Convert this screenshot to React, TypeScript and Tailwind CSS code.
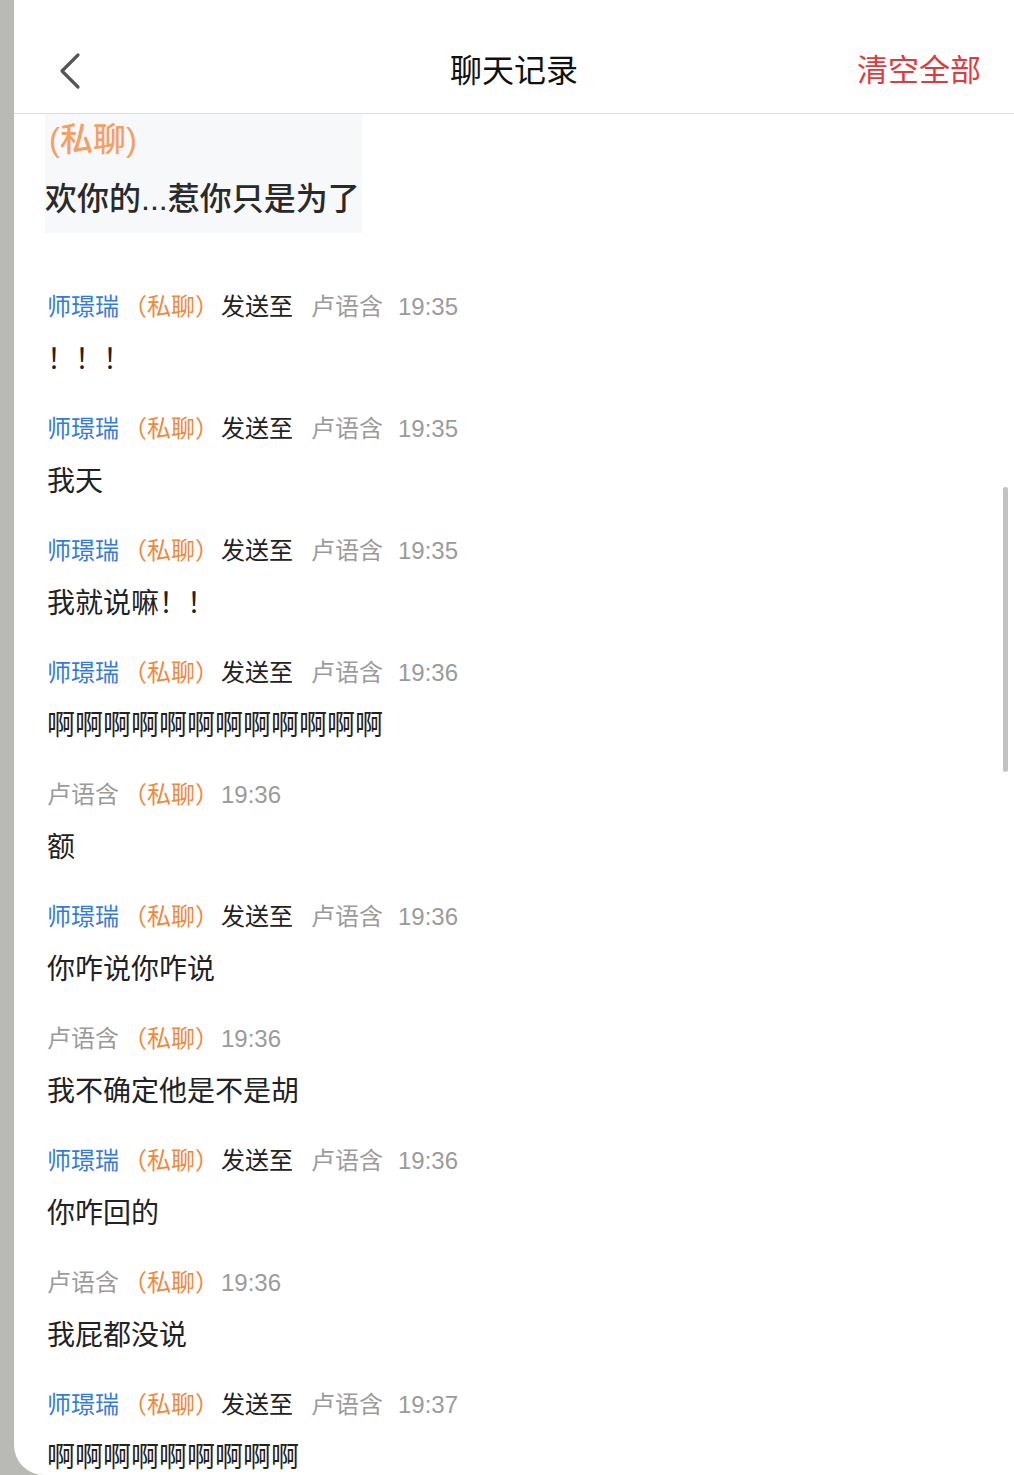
import React from "react";

type Msg = {
  from: "shi" | "lu";
  time: string;
  text: string;
};

const msgs: Msg[] = [
  { from: "shi", time: "19:35", text: "！！！" },
  { from: "shi", time: "19:35", text: "我天" },
  { from: "shi", time: "19:35", text: "我就说嘛！！" },
  { from: "shi", time: "19:36", text: "啊啊啊啊啊啊啊啊啊啊啊啊" },
  { from: "lu", time: "19:36", text: "额" },
  { from: "shi", time: "19:36", text: "你咋说你咋说" },
  { from: "lu", time: "19:36", text: "我不确定他是不是胡" },
  { from: "shi", time: "19:36", text: "你咋回的" },
  { from: "lu", time: "19:36", text: "我屁都没说" },
  { from: "shi", time: "19:37", text: "啊啊啊啊啊啊啊啊啊" },
];

const font = { fontFamily: '"Liberation Sans", "Noto Sans CJK SC", sans-serif' };

function MsgRow({ m }: { m: Msg }) {
  return (
    <div className="pt-[20px]">
      <div className="flex h-[48px] items-center whitespace-nowrap pt-[2px] text-[24px]">
        {m.from === "shi" ? (
          <>
            <span className="mr-[4px] text-[#3479e0]">师璟瑞</span>
            <span className="text-[#f0883c]">（私聊）</span>
            <span className="ml-[2px] mr-[18px] text-[#222]">发送至</span>
            <span className="mr-[15px] text-[#9b9b9b]">卢语含</span>
            <span className="text-[#9b9b9b]">{m.time}</span>
          </>
        ) : (
          <>
            <span className="mr-[4px] text-[#9b9b9b]">卢语含</span>
            <span className="text-[#f0883c]">（私聊）</span>
            <span className="ml-[2px] text-[#9b9b9b]">{m.time}</span>
          </>
        )}
      </div>
      <div className="flex h-[54px] items-center whitespace-nowrap pt-[6px] text-[28px] text-[#222]">
        {m.text}
      </div>
    </div>
  );
}

export default function App(): React.JSX.Element {
  return (
    <div className="flex h-[1475px] overflow-hidden bg-[#b9bab5] pl-[14px]" style={font}>
      <div className="relative flex flex-1 flex-col overflow-hidden rounded-bl-[30px] bg-white">
        <header className="grid h-[114px] shrink-0 grid-cols-[1fr_auto_1fr] items-center border-b border-[#dcdcdc] px-[33px] pt-[28px]">
          <button className="flex justify-self-start pl-[11px]">
            <svg width="24" height="38" viewBox="0 0 24 38" fill="none">
              <path d="M20 3 L4 19 L20 35" stroke="#555" strokeWidth="3.2" strokeLinecap="round" strokeLinejoin="round" />
            </svg>
          </button>
          <h1 className="text-[32px] font-normal leading-[40px] text-[#111]">聊天记录</h1>
          <button className="justify-self-end text-[31px] leading-[40px] text-[#e23a3c]">清空全部</button>
        </header>

        <main className="flex flex-col pl-[33px]">
          {/* quoted screenshot, cut off at top */}
          <div className="-ml-[2px] h-[119px] w-[317px] overflow-hidden bg-[#f7f8fa]">
            <div className="pl-[4px] pt-[6px] text-[33px] font-medium leading-[40px] text-[#f3a066]">(私聊)</div>
            <div className="whitespace-nowrap pt-[19px] text-[32px] font-medium leading-[40px] text-[#2a2a2a]">
              欢你的...惹你只是为了
            </div>
          </div>

          <div className="mt-[29px]">
            {msgs.map((m, i) => (
              <MsgRow key={i} m={m} />
            ))}
          </div>
        </main>

        <div className="absolute right-[6px] top-[487px] h-[285px] w-[5px] rounded-full bg-[#c2c2c2]" />
      </div>
    </div>
  );
}
